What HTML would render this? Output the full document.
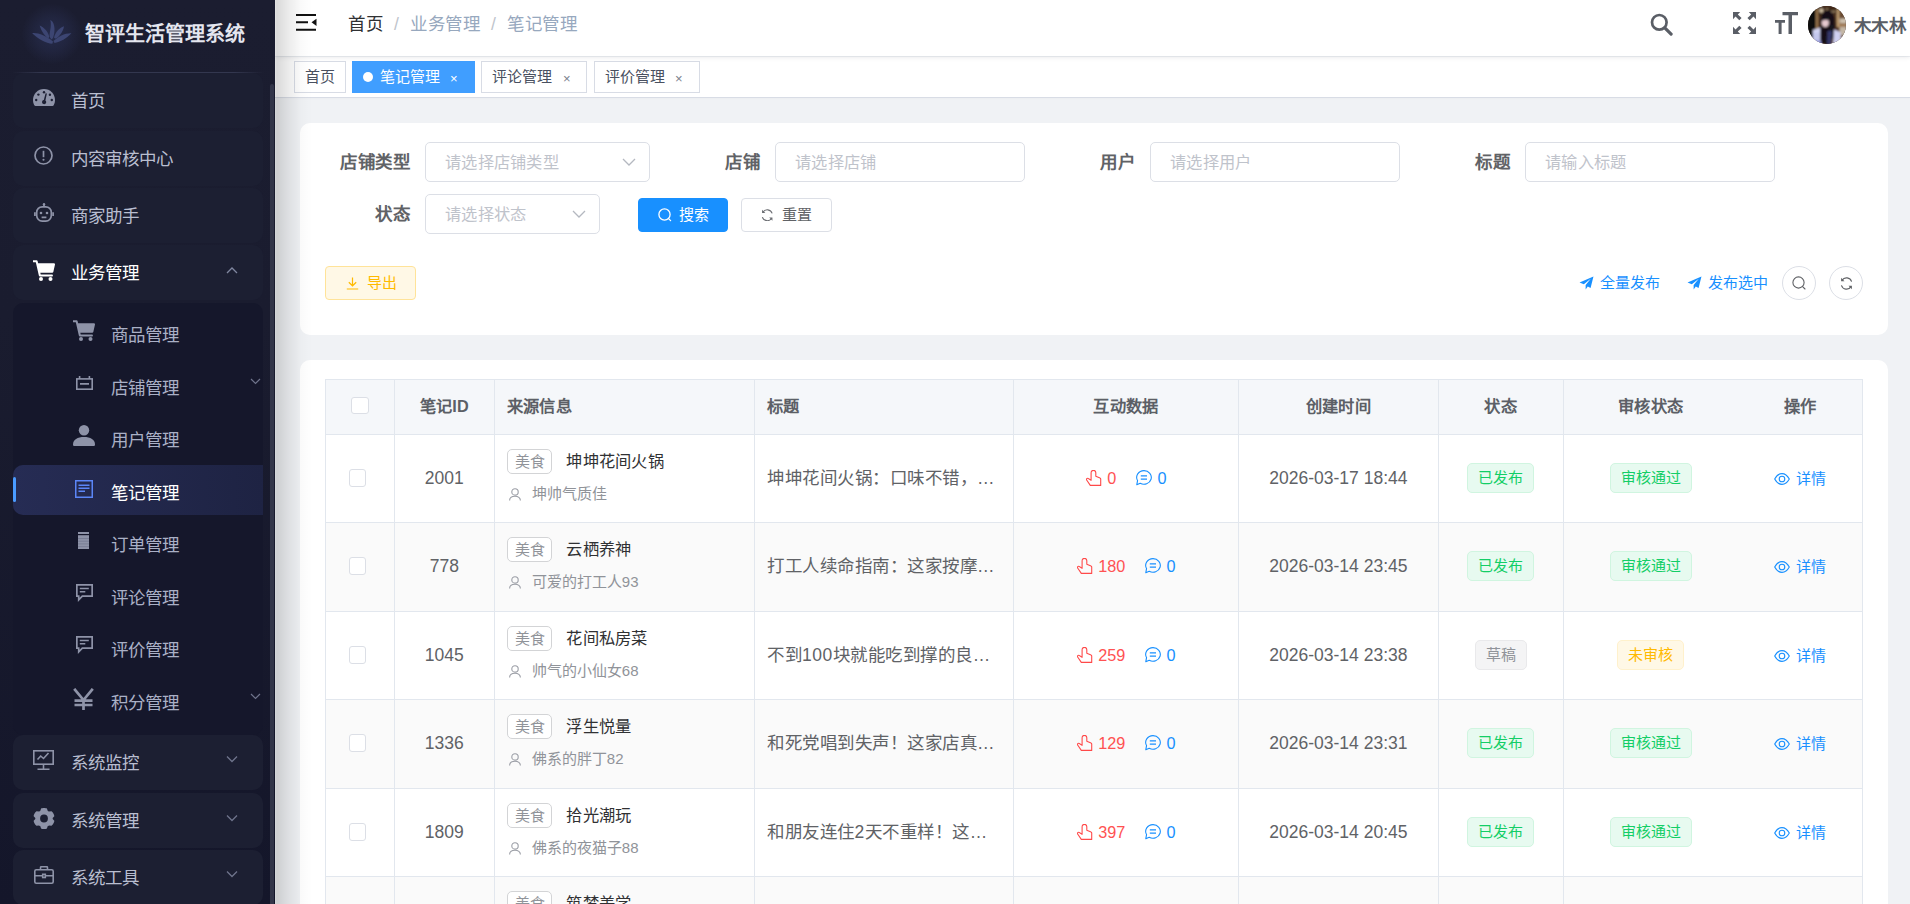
<!DOCTYPE html>
<html lang="zh-CN">
<head>
<meta charset="utf-8">
<title>笔记管理</title>
<style>
*{box-sizing:border-box;margin:0;padding:0}
html,body{width:1910px;height:904px;overflow:hidden}
body{font-family:"Liberation Sans",sans-serif;background:#f0f2f5;color:#606266;position:relative;font-size:17.5px}
svg{display:block}
.abs{position:absolute}
/* ---------- sidebar ---------- */
#side{position:absolute;left:0;top:0;width:275px;height:904px;background:linear-gradient(180deg,#1b1d30 0%,#1a1c2f 35%,#14162a 100%);overflow:hidden}
#side .logo{position:absolute;left:0;top:0;width:275px;height:73px}
#side .logo:after{content:"";position:absolute;left:12px;top:71.5px;width:252px;height:1px;background:linear-gradient(90deg,rgba(60,65,92,0),#33374f 12%,#33374f 88%,rgba(60,65,92,0))}
#side .logo .glow{position:absolute;left:22px;top:4px;width:60px;height:60px;border-radius:50%;background:radial-gradient(circle,rgba(40,46,80,.85) 0%,rgba(40,46,80,.45) 40%,rgba(27,30,49,0) 72%)}
#side .logo .ttl{position:absolute;left:85px;top:20px;font-size:20px;font-weight:700;color:#e4e6ef;white-space:nowrap;line-height:28px;letter-spacing:0}
.mi{position:absolute;left:13px;width:250px;height:55px;border-radius:10px;background:#1c1f32;color:#b9bed0;font-size:17.5px}
.mi .tx{position:absolute;left:58px;top:15px;line-height:26px;white-space:nowrap}
.mi .ic{position:absolute;left:19px;top:13px;width:24px;height:24px;color:#8d92a8}
.mi .ar{position:absolute;left:213px;top:20.5px;width:12px;height:8px;color:#6f748c}
.sub{position:absolute;left:13px;top:303px;width:250px;height:432px;border-radius:10px;background:#15172b}
.si{position:absolute;left:13px;width:250px;height:49.5px;color:#aab0c6;font-size:17.5px}
.si .tx{position:absolute;left:98px;top:14.5px;line-height:26px;white-space:nowrap}
.si .ic{position:absolute;left:60px;top:8px;width:22px;height:22px;color:#8d92a8}
.si .ar{position:absolute;left:237px;top:18px;width:11px;height:7px;color:#6f748c}
.si.act{background:linear-gradient(90deg,#262c54 0%,#1e2343 100%);border-radius:10px 0 0 10px;color:#fff}
.si.act:before{content:"";position:absolute;left:0;top:12px;width:3px;height:25px;border-radius:2px;background:#4a9bff}
#side .sb{position:absolute;left:270.2px;top:84px;width:4.3px;height:830px;background:#323549;border-radius:3px}
/* ---------- navbar ---------- */
#nav{position:absolute;left:275px;top:0;width:1635px;height:56px;background:#fff;box-shadow:0 1px 5px rgba(0,21,41,.1);z-index:2}
#shade{position:absolute;left:275px;top:0;width:38px;height:904px;background:linear-gradient(90deg,rgba(0,0,0,.11),rgba(0,0,0,.148) 5%,rgba(0,0,0,.108) 21%,rgba(0,0,0,.075) 37%,rgba(0,0,0,.046) 53%,rgba(0,0,0,.021) 68%,rgba(0,0,0,.008) 84%,rgba(0,0,0,0));pointer-events:none;z-index:5}
.bc{position:absolute;top:11px;line-height:26px;font-size:17.5px;white-space:nowrap}
#tags{position:absolute;left:275px;top:57px;width:1635px;height:41px;background:#fff;border-bottom:1px solid #d8dce5;box-shadow:0 1px 2px 0 rgba(0,0,0,.02)}
.tag{position:absolute;top:4px;height:32px;border:1px solid #d8dce5;background:#fff;color:#495060;font-size:15px;line-height:30px;white-space:nowrap}
.tag .x{position:absolute;top:1.5px;font-size:13px;color:#7a808c}
.tag.on .x{color:#fff}
.lk{font-size:15px;line-height:24px;color:#1890ff;white-space:nowrap}
.circ{width:34px;height:34px;border-radius:50%;border:1px solid #dcdfe6;background:#fff}
.tag.on{background:#409eff;border-color:#409eff;color:#fff}
/* ---------- cards ---------- */
.card{position:absolute;left:300px;width:1588px;background:#fff;border-radius:10px}
.lab{position:absolute;font-weight:700;color:#606266;font-size:17.5px;line-height:40px;text-align:right;width:100px;padding-right:15px;white-space:nowrap}
.inp{position:absolute;height:40px;border:1px solid #dcdfe6;border-radius:5px;background:#fff;color:#bfc3cb;font-size:16.25px;line-height:38px;padding-left:19px;white-space:nowrap}
.btn{position:absolute;height:34px;border-radius:4px;font-size:15px;line-height:32px;white-space:nowrap;border:1px solid #dcdfe6;background:#fff;color:#606266}
/* ---------- table ---------- */
#tb{position:absolute;left:325px;top:379px;width:1538px;height:525px}
#tb:before{content:"";position:absolute;left:0;top:0;width:1538px;height:1px;background:#e2e7ee;z-index:3}
#tb:after{content:"";position:absolute;left:0;top:0;width:1px;height:525px;background:#e2e7ee;z-index:3}
.hr{position:absolute;left:0;top:0;width:1537px;height:56px;background:#f5f7fa;border-bottom:1px solid #e2e7ee}
.row{position:absolute;left:0;width:1537px;height:88.5px;border-bottom:1px solid #e2e7ee;background:#fff}
.row.odd{background:#fafafa}
.vl{position:absolute;top:0;width:1px;height:525px;background:#e2e7ee}
.th{position:absolute;top:0;height:54px;line-height:54px;font-weight:700;color:#5c5f66;font-size:16.25px;white-space:nowrap}
.c{position:absolute;white-space:nowrap}
.cb{position:absolute;width:17.5px;height:17.5px;border:1px solid #dcdfe6;border-radius:3px;background:#fff}
.pill{position:absolute;height:29px;border-radius:5px;font-size:15px;line-height:27px;text-align:center;border:1px solid;white-space:nowrap}
.g{background:#e7faf0;border-color:#d0f5e0;color:#13ce66}
.y{background:#fff8e6;border-color:#fff1cc;color:#ffba00}
.n{background:#f4f4f5;border-color:#e9e9eb;color:#909399}
.cat{position:absolute;left:12.5px;top:14px;width:45.5px;height:24.5px;border:1px solid #d3d4d6;border-radius:5px;font-size:15px;line-height:23px;text-align:center;color:#909399;background:#fff}
.ct{text-align:center}
.f17{font-size:17.5px;line-height:26px;color:#606266}
.shop{font-size:16.25px;line-height:26px;color:#303133}
.usr{font-size:15px;line-height:24px;color:#909399}
.i16{display:inline-block;width:16px;height:16px;vertical-align:-2.5px;margin-right:6px}
.inter .i16{position:relative;left:1px;top:-1px}
.inter{font-size:16.25px;line-height:24px;text-align:center}
.inter .r{color:#ff5252;margin-right:19px}
.inter .b{color:#1890ff}
.det{font-size:15px;line-height:24px;color:#1890ff}
.det .i16{margin-right:6px}
.pill{position:static;display:inline-block;padding:0 10px;height:30px;line-height:28px}
.bc,.lab,.ttl17{letter-spacing:.5px}
.inp,.th,.shop{letter-spacing:.25px}
.t17{letter-spacing:.5px}
</style>
</head>
<body>
<div id="side">
  <div class="logo"><div class="glow"></div><div class="ttl">智评生活管理系统</div></div>
  <svg class="abs" style="left:32px;top:19px" width="40" height="26" viewBox="0 0 40 26"><g fill="#3c4572"><path d="M18.300 1C21.500 2 24.500 9 21 19l-1.500 1.500-1.600-2.300C16.800 14 20 8 18.300 1z"/><path d="M7.650 6.400C11.500 8 15.500 11.500 17.300 17.400l-.8 1.800C13.500 18 9.500 12.500 7.650 6.400z"/><path d="M32 7.200C27 9 23.500 13 22 18.500l1.300 1.300C27 18 31 13 32 7.200z"/><path d="M.2 14.200C6 13.500 14 17 21 22.500l-.7 2.300C14 24 6 20 .2 14.200z"/><path d="M39.400 14.300C33 14 26 17.500 21.500 22l1 2C28 23 35 19.500 39.400 14.300z"/></g></svg>
  <!-- top items -->
  <div class="mi" style="top:73px"><svg class="abs" style="left:20px;top:16px" width="22" height="17" viewBox="0 0 22 17"><path fill="#8e93a8" d="M11 0C4.900 0 0 4.900 0 11c0 2 .55 3.900 1.500 5.500.2.300.500.500.900.500h17.200c.4 0 .7-.2.900-.5C21.450 14.900 22 13 22 11 22 4.900 17.100 0 11 0z"/><g fill="#1d2034"><circle cx="11" cy="3.300" r="1.200"/><circle cx="5.400" cy="5.600" r="1.200"/><circle cx="3.200" cy="11" r="1.200"/><circle cx="18.800" cy="11" r="1.200"/><circle cx="16.900" cy="5.800" r="1.200"/><path d="M12.600 4.200l1.300.4-1.500 6.800a2.100 2.100 0 1 1-1.600-.4z"/></g></svg><div class="tx">首页</div></div>
  <div class="mi" style="top:130.500px"><svg class="abs" style="left:21px;top:15.500px" width="19" height="19" viewBox="0 0 19 19"><circle cx="9.500" cy="9.500" r="8.500" fill="none" stroke="#8e93a8" stroke-width="1.700"/><path d="M9.500 4.800v6.400" stroke="#8e93a8" stroke-width="1.700"/><circle cx="9.500" cy="13.700" r="1.050" fill="#8e93a8"/></svg><div class="tx">内容审核中心</div></div>
  <div class="mi" style="top:188px"><svg class="abs" style="left:20.500px;top:14.500px" width="20" height="20" viewBox="0 0 20 20"><g fill="none" stroke="#8e93a8" stroke-width="1.700"><rect x="2.700" y="3.800" width="14.600" height="14.300" rx="5.500"/><path d="M10 1v2.800M.9 9.300v3.600M19.100 9.300v3.600M7.600 14.400h4.800"/></g><circle cx="7" cy="10" r="1.300" fill="#8e93a8"/><circle cx="13" cy="10" r="1.300" fill="#8e93a8"/><circle cx="10" cy="1.200" r="1.200" fill="#8e93a8"/></svg><div class="tx">商家助手</div></div>
  <div class="mi" style="top:245px;color:#fff"><svg class="abs" style="left:19.500px;top:14.500px" width="22" height="21" viewBox="0 0 22 21"><path fill="#fff" d="M0 .3h3.600c.5 0 .9.300 1 .8l.5 2.200H21c.7 0 1.100.6 1 1.200l-1.700 7.400c-.1.500-.5.800-1 .8H7.300l.4 1.800h11.200c.6 0 1 .4 1 1s-.4 1-1 1H6.900c-.5 0-.9-.3-1-.8L2.800 2.300H0z"/><circle fill="#fff" cx="8" cy="18.900" r="2"/><circle fill="#fff" cx="17.500" cy="18.900" r="2"/></svg><div class="tx">业务管理</div><svg class="ar" viewBox="0 0 12 8"><path d="M1 7l5-5 5 5" fill="none" stroke="#8087a0" stroke-width="1.300"/></svg></div>
  <div class="sub"></div>
  <!-- children -->
  <div class="si" style="top:307.500px"><svg class="abs" style="left:59.500px;top:12px" width="22" height="21" viewBox="0 0 22 21"><path fill="#8e93a8" d="M0 .3h3.600c.5 0 .9.300 1 .8l.5 2.200H21c.7 0 1.100.6 1 1.200l-1.700 7.400c-.1.500-.5.800-1 .8H7.300l.4 1.800h11.200c.6 0 1 .4 1 1s-.4 1-1 1H6.900c-.5 0-.9-.3-1-.8L2.800 2.300H0z"/><circle fill="#8e93a8" cx="8" cy="18.900" r="2"/><circle fill="#8e93a8" cx="17.500" cy="18.900" r="2"/></svg><div class="tx">商品管理</div></div>
  <div class="si" style="top:360px"><svg class="abs" style="left:62.500px;top:15.500px" width="17" height="14" viewBox="0 0 17 14"><g fill="none" stroke="#8e93a8" stroke-width="1.600"><rect x=".8" y="2.900" width="15.400" height="10.300"/><path d="M3.600 0v3M13.400 0v3M4 7.900h9"/></g></svg><div class="tx">店铺管理</div><svg class="ar" viewBox="0 0 11 7"><path d="M1 1l4.500 4.500L10 1" fill="none" stroke="#6f748c" stroke-width="1.200"/></svg></div>
  <div class="si" style="top:412.500px"><svg class="abs" style="left:59.500px;top:12.500px" width="22" height="21" viewBox="0 0 22 21"><circle cx="11" cy="5.300" r="5.200" fill="#8e93a8"/><path fill="#8e93a8" d="M0 19.500C0 14.500 4.500 12 11 12s11 2.500 11 7.500c0 1-.6 1.500-1.500 1.500h-19C.6 21 0 20.500 0 19.500z"/></svg><div class="tx">用户管理</div></div>
  <div class="si act" style="top:465px"><svg class="abs" style="left:62px;top:15px" width="18" height="18" viewBox="0 0 18 18"><g fill="none" stroke="#5b86f7" stroke-width="1.500"><rect x=".75" y=".75" width="16.500" height="16.500"/><path d="M3.500 5.200h11M3.500 8.200h11M3.500 11.200h6.500"/></g></svg><div class="tx">笔记管理</div></div>
  <div class="si" style="top:517.500px"><svg class="abs" style="left:65px;top:14.500px" width="11" height="17" viewBox="0 0 11 17"><g fill="#8e93a8"><rect x="0" y="0" width="11" height="2"/><rect x="0" y="3.200" width="11" height="13.800"/></g><g stroke="#6c7188" stroke-width=".6"><path d="M0 6.500h11M0 9.200h11M0 11.900h11M0 14.600h11"/></g></svg><div class="tx">订单管理</div></div>
  <div class="si" style="top:570px"><svg class="abs" style="left:62.500px;top:14px" width="17" height="18" viewBox="0 0 17 18"><path d="M.85.85h15.300v11.300H6.300L2.700 15.900v-3.750H.85z" fill="none" stroke="#8e93a8" stroke-width="1.700"/><path d="M3.800 4.600h9M3.800 7.700h5.500" stroke="#8e93a8" stroke-width="1.500"/></svg><div class="tx">评论管理</div></div>
  <div class="si" style="top:622.500px"><svg class="abs" style="left:62.500px;top:13px" width="17" height="18" viewBox="0 0 17 18"><path d="M.85.85h15.300v11.300H6.300L2.700 15.900v-3.750H.85z" fill="none" stroke="#8e93a8" stroke-width="1.700"/><path d="M3.800 4.600h9M3.800 7.700h5.500" stroke="#8e93a8" stroke-width="1.500"/></svg><div class="tx">评价管理</div></div>
  <div class="si" style="top:675px"><svg class="abs" style="left:60px;top:12.500px" width="21" height="22" viewBox="0 0 21 22"><path d="M1.200.8l9.300 11.200L19.800.8M10.500 11v11M1.500 12.700h18M1.500 17h18" fill="none" stroke="#8e93a8" stroke-width="2.700"/></svg><div class="tx">积分管理</div><svg class="ar" viewBox="0 0 11 7"><path d="M1 1l4.500 4.500L10 1" fill="none" stroke="#6f748c" stroke-width="1.200"/></svg></div>
  <!-- bottom items -->
  <div class="mi" style="top:734.500px"><svg class="abs" style="left:20px;top:15.500px" width="21" height="20" viewBox="0 0 21 20"><g fill="none" stroke="#8e93a8" stroke-width="1.600"><rect x=".8" y=".8" width="19.400" height="13.400"/><path d="M10.500 14.500v4.500M4.500 19.300h12M4.500 9.500l3.200-3.500 2.800 2.500L15.500 3"/></g></svg><div class="tx">系统监控</div><svg class="ar" viewBox="0 0 12 8"><path d="M1 1.500l5 5 5-5" fill="none" stroke="#6f748c" stroke-width="1.300"/></svg></div>
  <div class="mi" style="top:793px"><svg class="abs" style="left:19.500px;top:14.500px" width="22" height="21" viewBox="0 0 22 21"><path fill="#8e93a8" fill-rule="evenodd" d="M8.100.6c.9-.8 4.900-.8 5.800 0l.9 2.300c.4.200.8.400 1.100.7l2.500-.4c1.100.4 3.100 3.800 2.900 5l-1.600 1.900c0 .2 0 .6 0 .8l1.600 1.900c.2 1.200-1.800 4.600-2.900 5l-2.500-.4c-.3.300-.7.500-1.100.7l-.9 2.300c-.9.800-4.900.8-5.800 0l-.9-2.300c-.4-.2-.8-.4-1.100-.7l-2.500.4c-1.100-.4-3.100-3.800-2.900-5l1.600-1.900c0-.2 0-.6 0-.8L.7 8.200c-.2-1.200 1.800-4.600 2.900-5l2.500.4c.3-.3.700-.5 1.100-.7zM11 6.600a3.900 3.900 0 1 0 0 7.800 3.900 3.900 0 0 0 0-7.800z"/></svg><div class="tx">系统管理</div><svg class="ar" viewBox="0 0 12 8"><path d="M1 1.500l5 5 5-5" fill="none" stroke="#6f748c" stroke-width="1.300"/></svg></div>
  <div class="mi" style="top:849.500px"><svg class="abs" style="left:20.500px;top:16px" width="20" height="18" viewBox="0 0 20 18"><g fill="none" stroke="#8e93a8" stroke-width="1.600"><rect x=".8" y="3.800" width="18.400" height="13.400" rx="1.500"/><path d="M6.500 3.800V1.700c0-.6.4-1 1-1h5c.6 0 1 .4 1 1v2.100M.7 9.800h8M11.300 9.800h8"/><rect x="8.700" y="8.300" width="2.600" height="3.200"/></g></svg><div class="tx">系统工具</div><svg class="ar" viewBox="0 0 12 8"><path d="M1 1.500l5 5 5-5" fill="none" stroke="#6f748c" stroke-width="1.300"/></svg></div>
  <div class="sb"></div>
</div>
<div id="nav">
  <svg class="abs" style="left:21px;top:14px" width="21" height="17" viewBox="0 0 21 17"><path d="M0 1h20M0 8.300h12M0 15.700h20" stroke="#111" stroke-width="1.900" fill="none"/><path d="M20.500 4.700v7.200l-5-3.600z" fill="#111"/></svg>
  <div class="bc" style="left:73px;color:#303133">首页</div>
  <div class="bc" style="left:119px;color:#c0c4cc">/</div>
  <div class="bc" style="left:135px;color:#97a8be">业务管理</div>
  <div class="bc" style="left:216px;color:#c0c4cc">/</div>
  <div class="bc" style="left:232px;color:#97a8be">笔记管理</div>
  <svg class="abs" style="left:1375px;top:13px" width="23" height="23" viewBox="0 0 23 23"><circle cx="9.300" cy="9.300" r="7.300" fill="none" stroke="#5a5e66" stroke-width="2.700"/><path d="M14.800 14.800l6.300 6.300" stroke="#5a5e66" stroke-width="3.200" stroke-linecap="round"/></svg>
  <svg class="abs" style="left:1458px;top:12px" width="23" height="22" viewBox="0 0 23 22"><g fill="#5a5e66"><path d="M0 0h7.200L4.800 2.400l3.800 3.600-2.300 2.300L2.500 4.600 0 7.200z"/><path d="M23 0h-7.200l2.400 2.400-3.800 3.600 2.300 2.300 3.800-3.700L23 7.200z"/><path d="M0 22h7.200l-2.400-2.400 3.800-3.600-2.300-2.300-3.800 3.700L0 14.800z"/><path d="M23 22h-7.200l2.400-2.400-3.800-3.600 2.300-2.300 3.800 3.700 2.500-2.600z"/></g></svg>
  <svg class="abs" style="left:1500px;top:12px" width="23" height="22" viewBox="0 0 23 22"><g fill="#5a5e66"><path d="M7.500 0H23v3.200h-6V22h-3.500V3.200h-6z"/><path d="M0 8h10v2.800H6.600V22H3.600V10.800H0z"/></g></svg>
  <div class="abs" style="left:1533px;top:6px;width:38px;height:38px;border-radius:50%;overflow:hidden;background:#3b2a26">
    <svg width="38" height="38" viewBox="0 0 38 38"><defs><filter id="bl" x="-10%" y="-10%" width="120%" height="120%"><feGaussianBlur stdDeviation=".9"/></filter></defs><g filter="url(#bl)"><rect x="-2" y="-2" width="42" height="42" fill="#4d3320"/><rect x="-2" y="-2" width="10" height="42" fill="#0d0a09"/><rect x="7.800" y="3" width="2.200" height="22" fill="#9c7850"/><rect x="10" y="0" width="19" height="10" fill="#3c2819"/><circle cx="13.300" cy="4.600" r="2.300" fill="#c9b89c"/><circle cx="19" cy="3.600" r="1.500" fill="#8d7556"/><circle cx="23.600" cy="6" r="1.200" fill="#c2ad88"/><circle cx="26.500" cy="5.500" r="1.100" fill="#b39d78"/><rect x="24" y="8" width="5" height="9" fill="#5a3d25"/><rect x="29" y="3" width="2.200" height="18" fill="#c4a375"/><rect x="31.200" y="5" width="8" height="8" fill="#6b4c30"/><rect x="31.500" y="12.500" width="8" height="5" fill="#cfc2b0"/><rect x="31" y="17.500" width="8" height="4" fill="#a07a55"/><rect x="31.500" y="21" width="8" height="8" fill="#c3b6a4"/><rect x="32" y="29" width="8" height="10" fill="#6b4c30"/><ellipse cx="19.800" cy="15" rx="7.200" ry="11" fill="#120e16"/><path d="M12.300 20c-.6 6-.7 12-.4 18h7.500c.2-6 .2-12-.4-18z" fill="#120e18"/><path d="M22 18l5 1-.5 14h-5z" fill="#17131d"/><ellipse cx="17.300" cy="16.600" rx="3.600" ry="4.400" fill="#e6c9cf"/><path d="M12.800 13.800c2-2.800 5.500-3.600 8.700-2.600l-1 3.200c-2.600-.7-5.200-.5-7.700.8z" fill="#18121d"/><path d="M4.800 24l7.500-2.500V38H5z" fill="#d3d6f5"/><path d="M26 23.500l6.500 2.500.5 8-4.500 4.500H25z" fill="#cfd0f2"/><path d="M19.500 25h4.500l-1 14h-4z" fill="#34386c"/><path d="M5 28h7M5 30.500h7M5 33h7" stroke="#9ea3d8" stroke-width=".7"/><path d="M4 34l9 1v6H4z" fill="#8f95e0"/></g></svg>
  </div>
  <div class="abs" style="left:1578.500px;top:13px;line-height:26px;font-weight:700;font-size:17.500px;color:#5a5e66;white-space:nowrap;letter-spacing:.5px">木木林</div>
</div>
<div id="tags">
  <div class="tag" style="left:19px;width:52px;padding-left:10px">首页</div>
  <div class="tag on" style="left:77px;width:123px;padding-left:27px"><span class="abs" style="left:10px;top:10px;width:10px;height:10px;border-radius:50%;background:#fff"></span>笔记管理<span class="x" style="left:97px">×</span></div>
  <div class="tag" style="left:206px;width:106px;padding-left:10px">评论管理<span class="x" style="left:81px">×</span></div>
  <div class="tag" style="left:319px;width:106px;padding-left:10px">评价管理<span class="x" style="left:80px">×</span></div>
</div>
<div id="shade"></div>
<div class="card" id="c1" style="top:123px;height:212px">
  <div class="lab" style="left:25px;top:19px">店铺类型</div>
  <div class="inp" style="left:125px;top:19px;width:225px">请选择店铺类型<svg class="abs" style="left:196px;top:15px" width="14" height="9" viewBox="0 0 14 9"><path d="M1 1l6 6 6-6" fill="none" stroke="#b4b8c0" stroke-width="1.300"/></svg></div>
  <div class="lab" style="left:375px;top:19px">店铺</div>
  <div class="inp" style="left:475px;top:19px;width:250px">请选择店铺</div>
  <div class="lab" style="left:750px;top:19px">用户</div>
  <div class="inp" style="left:850px;top:19px;width:250px">请选择用户</div>
  <div class="lab" style="left:1125px;top:19px">标题</div>
  <div class="inp" style="left:1225px;top:19px;width:250px">请输入标题</div>
  <div class="lab" style="left:25px;top:71px">状态</div>
  <div class="inp" style="left:125px;top:71px;width:175px">请选择状态<svg class="abs" style="left:146px;top:15px" width="14" height="9" viewBox="0 0 14 9"><path d="M1 1l6 6 6-6" fill="none" stroke="#b4b8c0" stroke-width="1.300"/></svg></div>
  <div class="btn" style="left:338px;top:75px;width:90px;background:#1890ff;border-color:#1890ff;color:#fff;padding-left:40px"><svg class="abs" style="left:19px;top:9px" width="14" height="14" viewBox="0 0 14 14"><circle cx="6.500" cy="6.500" r="5.600" fill="none" stroke="#fff" stroke-width="1.300"/><path d="M10.600 10.600l2 2" stroke="#fff" stroke-width="1.300" stroke-linecap="round"/></svg>搜索</div>
  <div class="btn" style="left:441px;top:75px;width:91px;padding-left:40px"><svg class="abs" style="left:19px;top:9.500px" width="12.500" height="12.500" viewBox="0 0 13 13"><g transform="translate(13,0) scale(-1,1)"><g fill="none" stroke="#6b6d72" stroke-width="1.100"><path d="M1.400 4.600A5.300 5.300 0 0 1 11 3.400"/><path d="M11.600 8.400A5.300 5.300 0 0 1 2 9.600"/></g><path d="M11.900.8v3.400H8.500z" fill="#6b6d72"/><path d="M1.100 12.200V8.800h3.400z" fill="#6b6d72"/></g></svg>重置</div>
  <div class="btn" style="left:25px;top:143px;width:91px;background:#fff8e6;border-color:#ffe399;color:#ffba00;padding-left:41px"><svg class="abs" style="left:20px;top:10px" width="13" height="13" viewBox="0 0 13 13"><path d="M6.500.5v8M2.800 5.200l3.700 3.600 3.700-3.600M.8 12h11.400" fill="none" stroke="#ffba00" stroke-width="1.200"/></svg>导出</div>
  <div class="abs lk" style="left:1300px;top:148px"><svg class="abs" style="left:-21px;top:5px" width="15" height="15" viewBox="0 0 14 14"><path d="M13.500.5L.5 6l4 1.600L11 2.500 6.200 8.400v4.100l2-2.800 2.600 1.500z" fill="#1890ff"/></svg>全量发布</div>
  <div class="abs lk" style="left:1408px;top:148px"><svg class="abs" style="left:-21px;top:5px" width="15" height="15" viewBox="0 0 14 14"><path d="M13.500.5L.5 6l4 1.600L11 2.500 6.200 8.400v4.100l2-2.800 2.600 1.500z" fill="#1890ff"/></svg>发布选中</div>
  <div class="abs circ" style="left:1482px;top:143px"><svg class="abs" style="left:9px;top:9px" width="14" height="14" viewBox="0 0 14 14"><circle cx="6.500" cy="6.500" r="5.600" fill="none" stroke="#606266" stroke-width="1.100"/><path d="M10.600 10.600l2.400 2.400" stroke="#606266" stroke-width="1.100" stroke-linecap="round"/></svg></div>
  <div class="abs circ" style="left:1529px;top:143px"><svg class="abs" style="left:10px;top:10px" width="13" height="13" viewBox="0 0 13 13"><g transform="translate(13,0) scale(-1,1)"><g fill="none" stroke="#606266" stroke-width="1.100"><path d="M1.400 4.600A5.300 5.300 0 0 1 11 3.400"/><path d="M11.600 8.400A5.300 5.300 0 0 1 2 9.600"/></g><path d="M11.900.8v3.400H8.500z" fill="#606266"/><path d="M1.100 12.200V8.800h3.400z" fill="#606266"/></g></svg></div>
</div>
<div class="card" id="c2" style="top:360px;height:560px"></div>
<div id="tb">
<div class="hr"></div>
<div class="row" style="top:56px;height:88px"><div class="cb" style="left:23.500px;top:34px"></div><div class="c ct f17" style="left:69.4px;width:99.9px;top:29.500px">2001</div><div class="abs" style="left:169.3px;top:0;width:260px;height:88px"><div class="cat">美食</div><div class="c shop" style="left:72px;top:12.500px">坤坤花间火锅</div><svg class="abs" style="left:14.500px;top:53px" width="12" height="13" viewBox="0 0 12 13"><circle cx="6" cy="3.900" r="3.200" fill="none" stroke="#9b9ea6" stroke-width="1.100"/><path d="M.6 12.600c0-2.700 2.300-4.300 5.400-4.300s5.400 1.600 5.400 4.300" fill="none" stroke="#9b9ea6" stroke-width="1.100"/></svg><div class="c usr" style="left:37.500px;top:47px">坤帅气质佳</div></div><div class="c f17 t17" style="left:442.1px;top:30px">坤坤花间火锅：口味不错，…</div><div class="c inter" style="left:688.3px;width:225.2px;top:31px"><span class="r"><svg class="i16" viewBox="0 0 16 16"><path d="M5.100 10.300V2.700a2.350 2.350 0 0 1 4.700 0v3.500L14 8q.7.2.7 1v6.400H4.300L.65 10q-.5-.9.400-1.500.8-.5 1.600.2z" fill="none" stroke="#ff4949" stroke-width="1.100" stroke-linejoin="round"/></svg>0</span><span class="b"><svg class="i16" viewBox="0 0 16 16"><path d="M8 .6A7.300 6.800 0 1 1 4.200 13.200L.8 14.700l.75-4.100A7.300 6.800 0 0 1 8 .6z" fill="none" stroke="#1890ff" stroke-width="1.100" stroke-linejoin="round"/><path d="M4.800 5.900H11M4.800 9.200H11" stroke="#1890ff" stroke-width="1.200"/></svg>0</span></div><div class="c ct f17" style="left:913.5px;width:199.8px;top:29.500px">2026-03-17 18:44</div><div class="c ct" style="left:1113.3px;width:124.8px;top:28px"><span class="pill g">已发布</span></div><div class="c ct" style="left:1238.1px;width:174.9px;top:28px"><span class="pill g">审核通过</span></div><div class="c ct det" style="left:1413px;width:124.5px;top:32px"><svg class="i16" viewBox="0 0 16 16"><path d="M.7 8C2.600 4.500 5 2.600 8 2.600S13.400 4.500 15.300 8C13.400 11.500 11 13.400 8 13.400S2.600 11.500.7 8z" fill="none" stroke="#1890ff" stroke-width="1.100"/><circle cx="8" cy="8" r="2.800" fill="none" stroke="#1890ff" stroke-width="1.100"/></svg>详情</div></div>
<div class="row odd" style="top:144px;height:89px"><div class="cb" style="left:23.500px;top:34px"></div><div class="c ct f17" style="left:69.4px;width:99.9px;top:29.500px">778</div><div class="abs" style="left:169.3px;top:0;width:260px;height:88px"><div class="cat">美食</div><div class="c shop" style="left:72px;top:12.500px">云栖养神</div><svg class="abs" style="left:14.500px;top:53px" width="12" height="13" viewBox="0 0 12 13"><circle cx="6" cy="3.900" r="3.200" fill="none" stroke="#9b9ea6" stroke-width="1.100"/><path d="M.6 12.600c0-2.700 2.300-4.300 5.400-4.300s5.400 1.600 5.400 4.300" fill="none" stroke="#9b9ea6" stroke-width="1.100"/></svg><div class="c usr" style="left:37.500px;top:47px">可爱的打工人93</div></div><div class="c f17 t17" style="left:442.1px;top:30px">打工人续命指南：这家按摩…</div><div class="c inter" style="left:688.3px;width:225.2px;top:31px"><span class="r"><svg class="i16" viewBox="0 0 16 16"><path d="M5.100 10.300V2.700a2.350 2.350 0 0 1 4.700 0v3.500L14 8q.7.2.7 1v6.400H4.300L.65 10q-.5-.9.400-1.500.8-.5 1.600.2z" fill="none" stroke="#ff4949" stroke-width="1.100" stroke-linejoin="round"/></svg>180</span><span class="b"><svg class="i16" viewBox="0 0 16 16"><path d="M8 .6A7.300 6.800 0 1 1 4.200 13.200L.8 14.700l.75-4.100A7.300 6.800 0 0 1 8 .6z" fill="none" stroke="#1890ff" stroke-width="1.100" stroke-linejoin="round"/><path d="M4.800 5.900H11M4.800 9.200H11" stroke="#1890ff" stroke-width="1.200"/></svg>0</span></div><div class="c ct f17" style="left:913.5px;width:199.8px;top:29.500px">2026-03-14 23:45</div><div class="c ct" style="left:1113.3px;width:124.8px;top:28px"><span class="pill g">已发布</span></div><div class="c ct" style="left:1238.1px;width:174.9px;top:28px"><span class="pill g">审核通过</span></div><div class="c ct det" style="left:1413px;width:124.5px;top:32px"><svg class="i16" viewBox="0 0 16 16"><path d="M.7 8C2.600 4.500 5 2.600 8 2.600S13.400 4.500 15.300 8C13.400 11.500 11 13.400 8 13.400S2.600 11.500.7 8z" fill="none" stroke="#1890ff" stroke-width="1.100"/><circle cx="8" cy="8" r="2.800" fill="none" stroke="#1890ff" stroke-width="1.100"/></svg>详情</div></div>
<div class="row" style="top:233px;height:88px"><div class="cb" style="left:23.500px;top:34px"></div><div class="c ct f17" style="left:69.4px;width:99.9px;top:29.500px">1045</div><div class="abs" style="left:169.3px;top:0;width:260px;height:88px"><div class="cat">美食</div><div class="c shop" style="left:72px;top:12.500px">花间私房菜</div><svg class="abs" style="left:14.500px;top:53px" width="12" height="13" viewBox="0 0 12 13"><circle cx="6" cy="3.900" r="3.200" fill="none" stroke="#9b9ea6" stroke-width="1.100"/><path d="M.6 12.600c0-2.700 2.300-4.300 5.400-4.300s5.400 1.600 5.400 4.300" fill="none" stroke="#9b9ea6" stroke-width="1.100"/></svg><div class="c usr" style="left:37.500px;top:47px">帅气的小仙女68</div></div><div class="c f17 t17" style="left:442.1px;top:30px">不到100块就能吃到撑的良…</div><div class="c inter" style="left:688.3px;width:225.2px;top:31px"><span class="r"><svg class="i16" viewBox="0 0 16 16"><path d="M5.100 10.300V2.700a2.350 2.350 0 0 1 4.700 0v3.500L14 8q.7.2.7 1v6.400H4.300L.65 10q-.5-.9.400-1.500.8-.5 1.600.2z" fill="none" stroke="#ff4949" stroke-width="1.100" stroke-linejoin="round"/></svg>259</span><span class="b"><svg class="i16" viewBox="0 0 16 16"><path d="M8 .6A7.300 6.800 0 1 1 4.200 13.200L.8 14.700l.75-4.100A7.300 6.800 0 0 1 8 .6z" fill="none" stroke="#1890ff" stroke-width="1.100" stroke-linejoin="round"/><path d="M4.800 5.900H11M4.800 9.200H11" stroke="#1890ff" stroke-width="1.200"/></svg>0</span></div><div class="c ct f17" style="left:913.5px;width:199.8px;top:29.500px">2026-03-14 23:38</div><div class="c ct" style="left:1113.3px;width:124.8px;top:28px"><span class="pill n">草稿</span></div><div class="c ct" style="left:1238.1px;width:174.9px;top:28px"><span class="pill y">未审核</span></div><div class="c ct det" style="left:1413px;width:124.5px;top:32px"><svg class="i16" viewBox="0 0 16 16"><path d="M.7 8C2.600 4.500 5 2.600 8 2.600S13.400 4.500 15.300 8C13.400 11.500 11 13.400 8 13.400S2.600 11.500.7 8z" fill="none" stroke="#1890ff" stroke-width="1.100"/><circle cx="8" cy="8" r="2.800" fill="none" stroke="#1890ff" stroke-width="1.100"/></svg>详情</div></div>
<div class="row odd" style="top:321px;height:89px"><div class="cb" style="left:23.500px;top:34px"></div><div class="c ct f17" style="left:69.4px;width:99.9px;top:29.500px">1336</div><div class="abs" style="left:169.3px;top:0;width:260px;height:88px"><div class="cat">美食</div><div class="c shop" style="left:72px;top:12.500px">浮生悦量</div><svg class="abs" style="left:14.500px;top:53px" width="12" height="13" viewBox="0 0 12 13"><circle cx="6" cy="3.900" r="3.200" fill="none" stroke="#9b9ea6" stroke-width="1.100"/><path d="M.6 12.600c0-2.700 2.300-4.300 5.400-4.300s5.400 1.600 5.400 4.300" fill="none" stroke="#9b9ea6" stroke-width="1.100"/></svg><div class="c usr" style="left:37.500px;top:47px">佛系的胖丁82</div></div><div class="c f17 t17" style="left:442.1px;top:30px">和死党唱到失声！这家店真…</div><div class="c inter" style="left:688.3px;width:225.2px;top:31px"><span class="r"><svg class="i16" viewBox="0 0 16 16"><path d="M5.100 10.300V2.700a2.350 2.350 0 0 1 4.700 0v3.500L14 8q.7.2.7 1v6.400H4.300L.65 10q-.5-.9.400-1.500.8-.5 1.600.2z" fill="none" stroke="#ff4949" stroke-width="1.100" stroke-linejoin="round"/></svg>129</span><span class="b"><svg class="i16" viewBox="0 0 16 16"><path d="M8 .6A7.300 6.800 0 1 1 4.200 13.200L.8 14.700l.75-4.100A7.300 6.800 0 0 1 8 .6z" fill="none" stroke="#1890ff" stroke-width="1.100" stroke-linejoin="round"/><path d="M4.800 5.900H11M4.800 9.200H11" stroke="#1890ff" stroke-width="1.200"/></svg>0</span></div><div class="c ct f17" style="left:913.5px;width:199.8px;top:29.500px">2026-03-14 23:31</div><div class="c ct" style="left:1113.3px;width:124.8px;top:28px"><span class="pill g">已发布</span></div><div class="c ct" style="left:1238.1px;width:174.9px;top:28px"><span class="pill g">审核通过</span></div><div class="c ct det" style="left:1413px;width:124.5px;top:32px"><svg class="i16" viewBox="0 0 16 16"><path d="M.7 8C2.600 4.500 5 2.600 8 2.600S13.400 4.500 15.300 8C13.400 11.500 11 13.400 8 13.400S2.600 11.500.7 8z" fill="none" stroke="#1890ff" stroke-width="1.100"/><circle cx="8" cy="8" r="2.800" fill="none" stroke="#1890ff" stroke-width="1.100"/></svg>详情</div></div>
<div class="row" style="top:410px;height:88px"><div class="cb" style="left:23.500px;top:34px"></div><div class="c ct f17" style="left:69.4px;width:99.9px;top:29.500px">1809</div><div class="abs" style="left:169.3px;top:0;width:260px;height:88px"><div class="cat">美食</div><div class="c shop" style="left:72px;top:12.500px">拾光潮玩</div><svg class="abs" style="left:14.500px;top:53px" width="12" height="13" viewBox="0 0 12 13"><circle cx="6" cy="3.900" r="3.200" fill="none" stroke="#9b9ea6" stroke-width="1.100"/><path d="M.6 12.600c0-2.700 2.300-4.300 5.400-4.300s5.400 1.600 5.400 4.300" fill="none" stroke="#9b9ea6" stroke-width="1.100"/></svg><div class="c usr" style="left:37.500px;top:47px">佛系的夜猫子88</div></div><div class="c f17 t17" style="left:442.1px;top:30px">和朋友连住2天不重样！这…</div><div class="c inter" style="left:688.3px;width:225.2px;top:31px"><span class="r"><svg class="i16" viewBox="0 0 16 16"><path d="M5.100 10.300V2.700a2.350 2.350 0 0 1 4.700 0v3.500L14 8q.7.2.7 1v6.400H4.300L.65 10q-.5-.9.400-1.500.8-.5 1.600.2z" fill="none" stroke="#ff4949" stroke-width="1.100" stroke-linejoin="round"/></svg>397</span><span class="b"><svg class="i16" viewBox="0 0 16 16"><path d="M8 .6A7.300 6.800 0 1 1 4.200 13.200L.8 14.700l.75-4.100A7.300 6.800 0 0 1 8 .6z" fill="none" stroke="#1890ff" stroke-width="1.100" stroke-linejoin="round"/><path d="M4.800 5.900H11M4.800 9.200H11" stroke="#1890ff" stroke-width="1.200"/></svg>0</span></div><div class="c ct f17" style="left:913.5px;width:199.8px;top:29.500px">2026-03-14 20:45</div><div class="c ct" style="left:1113.3px;width:124.8px;top:28px"><span class="pill g">已发布</span></div><div class="c ct" style="left:1238.1px;width:174.9px;top:28px"><span class="pill g">审核通过</span></div><div class="c ct det" style="left:1413px;width:124.5px;top:32px"><svg class="i16" viewBox="0 0 16 16"><path d="M.7 8C2.600 4.500 5 2.600 8 2.600S13.400 4.500 15.300 8C13.400 11.500 11 13.400 8 13.400S2.600 11.500.7 8z" fill="none" stroke="#1890ff" stroke-width="1.100"/><circle cx="8" cy="8" r="2.800" fill="none" stroke="#1890ff" stroke-width="1.100"/></svg>详情</div></div>
<div class="row odd" style="top:498px;height:89px"><div class="cb" style="left:23.500px;top:34px"></div><div class="c ct f17" style="left:69.4px;width:99.9px;top:29.500px">1902</div><div class="abs" style="left:169.3px;top:0;width:260px;height:88px"><div class="cat">美食</div><div class="c shop" style="left:72px;top:12.500px">筑梦美学</div><svg class="abs" style="left:14.500px;top:53px" width="12" height="13" viewBox="0 0 12 13"><circle cx="6" cy="3.900" r="3.200" fill="none" stroke="#9b9ea6" stroke-width="1.100"/><path d="M.6 12.600c0-2.700 2.300-4.300 5.400-4.300s5.400 1.600 5.400 4.300" fill="none" stroke="#9b9ea6" stroke-width="1.100"/></svg><div class="c usr" style="left:37.500px;top:47px">文艺的旅行家12</div></div><div class="c f17 t17" style="left:442.1px;top:30px">周末放松好去处！这家店…</div><div class="c inter" style="left:688.3px;width:225.2px;top:31px"><span class="r"><svg class="i16" viewBox="0 0 16 16"><path d="M5.100 10.300V2.700a2.350 2.350 0 0 1 4.700 0v3.500L14 8q.7.2.7 1v6.400H4.300L.65 10q-.5-.9.400-1.500.8-.5 1.600.2z" fill="none" stroke="#ff4949" stroke-width="1.100" stroke-linejoin="round"/></svg>88</span><span class="b"><svg class="i16" viewBox="0 0 16 16"><path d="M8 .6A7.300 6.800 0 1 1 4.200 13.200L.8 14.700l.75-4.100A7.300 6.800 0 0 1 8 .6z" fill="none" stroke="#1890ff" stroke-width="1.100" stroke-linejoin="round"/><path d="M4.800 5.900H11M4.800 9.200H11" stroke="#1890ff" stroke-width="1.200"/></svg>0</span></div><div class="c ct f17" style="left:913.5px;width:199.8px;top:29.500px">2026-03-14 19:20</div><div class="c ct" style="left:1113.3px;width:124.8px;top:28px"><span class="pill g">已发布</span></div><div class="c ct" style="left:1238.1px;width:174.9px;top:28px"><span class="pill g">审核通过</span></div><div class="c ct det" style="left:1413px;width:124.5px;top:32px"><svg class="i16" viewBox="0 0 16 16"><path d="M.7 8C2.600 4.500 5 2.600 8 2.600S13.400 4.500 15.300 8C13.400 11.500 11 13.400 8 13.400S2.600 11.500.7 8z" fill="none" stroke="#1890ff" stroke-width="1.100"/><circle cx="8" cy="8" r="2.800" fill="none" stroke="#1890ff" stroke-width="1.100"/></svg>详情</div></div>
<div class="vl" style="left:68.9px"></div>
<div class="vl" style="left:168.8px"></div>
<div class="vl" style="left:429.1px"></div>
<div class="vl" style="left:687.8px"></div>
<div class="vl" style="left:913.0px"></div>
<div class="vl" style="left:1112.8px"></div>
<div class="vl" style="left:1237.6px"></div>
<div class="vl" style="left:1537.0px"></div>
<div class="cb" style="left:26px;top:17.500px"></div>
<div class="th" style="left:69.4px;width:99.9px;text-align:center">笔记ID</div>
<div class="th" style="left:181.8px">来源信息</div>
<div class="th" style="left:442.1px">标题</div>
<div class="th" style="left:688.3px;width:225.2px;text-align:center">互动数据</div>
<div class="th" style="left:913.5px;width:199.8px;text-align:center">创建时间</div>
<div class="th" style="left:1113.3px;width:124.8px;text-align:center">状态</div>
<div class="th" style="left:1238.1px;width:174.9px;text-align:center">审核状态</div>
<div class="th" style="left:1413px;width:124.5px;text-align:center">操作</div>
</div>
</body>
</html>
